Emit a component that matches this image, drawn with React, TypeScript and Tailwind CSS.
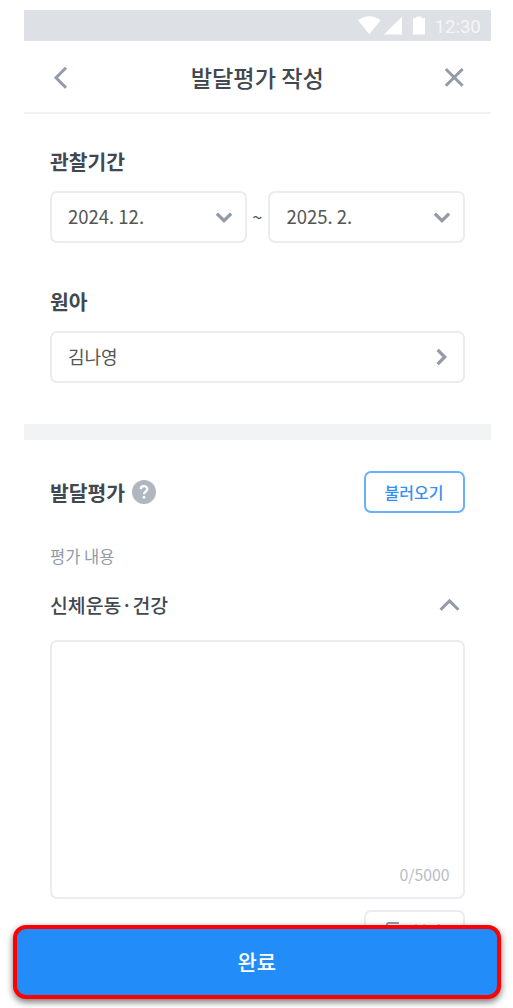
import type { ReactNode } from "react";

const borders = "rounded-[7px] border-2 border-[#ebecf0]";

function Chevron({ className, d, width = 3.4 }: { className: string; d: string; width?: number }) {
  return (
    <svg className={className} viewBox="0 0 24 24" fill="none" stroke="#929ba6" strokeWidth={width}>
      <path d={d} />
    </svg>
  );
}

function StatusBar() {
  return (
    <div className="flex h-[31px] shrink-0 items-center justify-end bg-[#dde1e6] pr-[11px] text-white">
      <svg className="h-[19px] w-[62px]" viewBox="0 0 62 19" fill="currentColor">
        <path d="M0 4.2Q11 -3.8 22.5 4.2L11.3 18.2Z" />
        <path d="M26 18.6L44 .8V18.6Z" />
      </svg>
      <svg className="-ml-[7px] h-[19px] w-[12px]" viewBox="0 0 12 19" fill="currentColor">
        <path d="M0 2H3.5V.5H8.5V2H12V18.6H0Z" />
      </svg>
      <span className="ml-[10px] w-[45px] pt-[2px] font-[Roboto] text-[18.6px] leading-6 font-normal whitespace-nowrap text-white/70">12:30</span>
    </div>
  );
}

function Title({ children }: { children: ReactNode }) {
  return <h2 className="text-[20.4px] leading-[30px] font-bold">{children}</h2>;
}

function MonthSelect({ value, className }: { value: string; className: string }) {
  return (
    <button className={`flex h-[52px] items-center justify-between pr-[12px] text-[18.5px] text-[#555] ${borders} ${className}`}>
      <span>{value}</span>
      <Chevron className="size-[18px]" d="M2.5 7.5L12 17L21.5 7.5" width={4.4} />
    </button>
  );
}

export default function App() {
  return (
    <div className="relative h-[1008px] w-[513px] overflow-hidden bg-white font-['Noto_Sans_CJK_KR',sans-serif] text-[#414850]">
      <div className="ml-6 flex w-[466.5px] flex-col pt-[10px]">
        <StatusBar />
        <header className="flex h-[73px] items-center justify-between border-b-2 border-[#f0f1f2] pr-[27px] pl-[26px]">
          <button aria-label="back">
            <svg className="h-6 w-5" viewBox="0 0 20 24" fill="none" stroke="#929ba6" strokeWidth="3">
              <path d="M16 2.8L6 12.8L16 22.8" />
            </svg>
          </button>
          <h1 className="pl-px text-[23.2px] leading-8 font-medium">발달평가 작성</h1>
          <button aria-label="close">
            <svg className="h-5 w-5" viewBox="0 0 20 20" fill="none" stroke="#929ba6" strokeWidth="3">
              <path d="M1.8 2L18.6 18.8M18.6 2L1.8 18.8" />
            </svg>
          </button>
        </header>

        <section className="px-[26px] pt-8">
          <Title>관찰기간</Title>
          <div className="mt-[15px] flex items-center justify-between">
            <MonthSelect value="2024. 12." className="w-[197px] pl-[16px]" />
            <span className="pb-[2px] text-[18px] text-[#555]">~</span>
            <MonthSelect value="2025. 2." className="w-[197px] pl-[17px]" />
          </div>
        </section>

        <section className="px-[26px] pt-[43px]">
          <Title>원아</Title>
          <button className={`mt-[15px] flex h-[52px] w-full items-center justify-between pr-[13px] pl-[16px] text-[18px] text-[#555] ${borders}`}>
            <span className="pb-px">김나영</span>
            <Chevron className="size-[18px]" d="M7.5 2.5L17 12L7.5 21.5" width={4.4} />
          </button>
        </section>

        <div className="mt-[41px] h-4 bg-[#f1f3f5]" />

        <section className="px-[26px] pt-[31px]">
          <div className="flex items-center">
            <Title>발달평가</Title>
            <svg className="ml-[6.5px] size-6" viewBox="0 0 24 24" fill="none">
              <circle cx="12" cy="12" r="12" fill="#b0b7bf" />
              <path d="M8.7 9.2C8.7 5.1 15.3 5.2 15.3 9C15.3 11.4 12 11.4 12 14.3" stroke="white" strokeWidth="2.2" />
              <circle cx="12" cy="17.3" r="1.4" fill="white" />
            </svg>
            <button className="ml-auto h-[42px] w-[101px] rounded-[7px] border-2 border-[#69b1fc] pb-px text-[16px] font-medium text-[#338ff5]">불러오기</button>
          </div>
          <p className="mt-[31px] text-[16.5px] leading-6 text-[#929ba6]">평가 내용</p>
          <div className="mt-[22px] flex h-[30px] items-center justify-between pr-[5px]">
            <h3 className="pb-px text-[19.4px] font-medium">신체운동·건강</h3>
            <Chevron className="mb-[2px] size-[21px]" d="M1.8 18L12 7.8L22.2 18" />
          </div>
          <div className={`mt-5 flex h-[259px] items-end justify-end pr-[13px] pb-[10px] text-[15.8px] leading-6 text-[#b6bdc5] ${borders}`}>0/5000</div>
          <button className={`mt-[11px] ml-auto flex h-[42px] w-[101px] items-center justify-center gap-2 text-[16px] font-medium text-[#929ba6] ${borders}`}>
            <svg className="size-[19px]" viewBox="0 0 19 19" fill="none" stroke="currentColor" strokeWidth="2">
              <path d="M1 13V2.5Q1 1 2.5 1H13" />
              <rect x="4.5" y="4.5" width="13.5" height="13.5" rx="1" />
            </svg>
            복사
          </button>
        </section>
      </div>

      <button className="absolute top-[925px] left-[12.5px] h-[74px] w-[488.5px] rounded-[13px] border-4 border-[#fe0000] bg-[#228df9] text-[21px] font-medium text-white shadow-[0_3px_7px_rgba(0,0,0,0.55)]">
        완료
      </button>
    </div>
  );
}
